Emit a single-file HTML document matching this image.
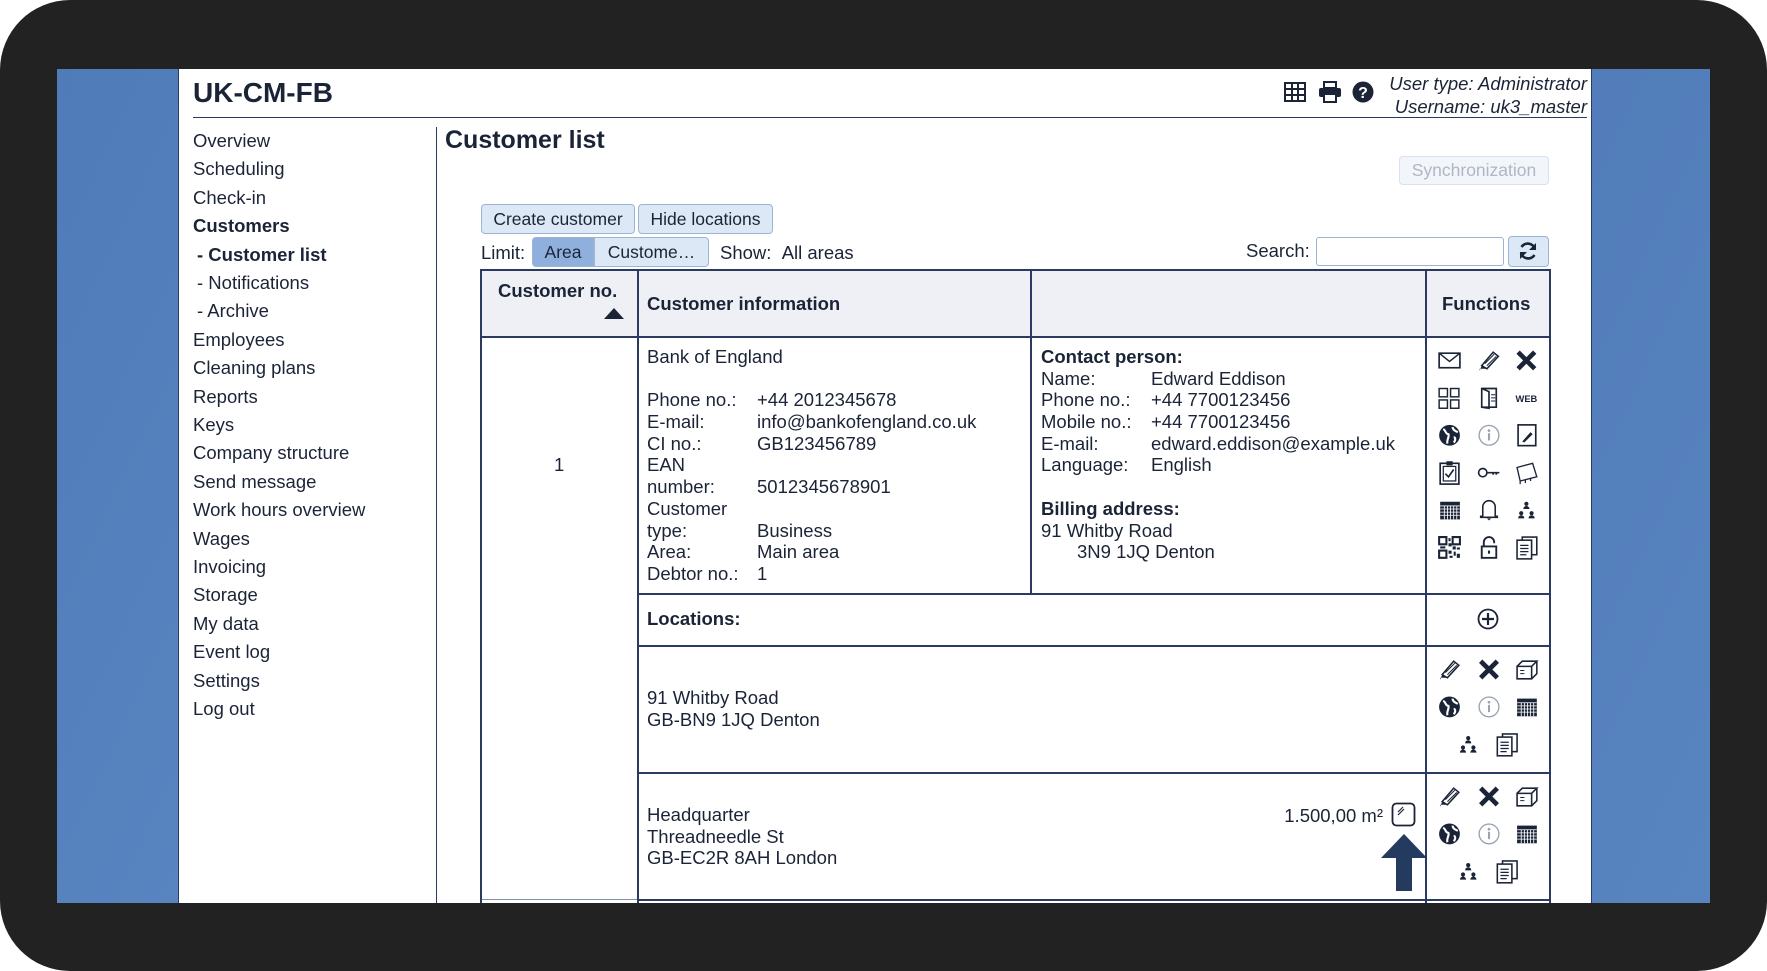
<!DOCTYPE html>
<html><head><meta charset="utf-8">
<style>
*{margin:0;padding:0;box-sizing:border-box}
body{width:1767px;height:971px;background:#fff;overflow:hidden;position:relative;font-family:"Liberation Sans",Arial,sans-serif;color:#1b2437}
#frame{position:absolute;left:0;top:0;width:1767px;height:971px;background:#222;border-radius:70px}
#screen{position:absolute;left:57px;top:69px;width:1653px;height:834px;background:linear-gradient(115deg,#4f7cb9 0%,#5d89c4 40%,#4d78b5 60%,#5884c0 100%)}
#panel{position:absolute;left:178px;top:69px;width:1414px;height:834px;background:#fff;border-left:1px solid #2a3a60;border-right:1px solid #2a3a60}
.a{position:absolute;white-space:nowrap}
.t{font-size:18.5px}
.b{font-weight:bold}
.menu div{position:absolute;left:193px;font-size:18.5px;white-space:nowrap}
.btn{position:absolute;border:1px solid #9cb4d6;background:#dde8f6;border-radius:4px;font-size:17.5px;text-align:center}
.lines div{height:21.7px;line-height:21.7px;font-size:18.5px;white-space:nowrap}
.hl{position:absolute;background:#2a3a60;height:1.5px}
.vl{position:absolute;background:#2a3a60;width:1.5px}
svg.i{position:absolute}
</style></head><body>
<div id="frame"></div>
<div id="screen"></div>
<div id="panel"></div>

<div class="a b" style="left:193px;top:77px;font-size:28px">UK-CM-FB</div>
<div class="hl" style="left:193px;top:117px;width:1394px;height:1px"></div>
<div class="a" style="right:180px;top:72px;font-size:18.5px;font-style:italic;text-align:right;line-height:23px">User type: Administrator<br>Username: uk3_master</div>
<svg class="i" style="left:1284px;top:82px" width="22" height="20" viewBox="0 0 22 20"><rect x="1" y="1" width="20" height="18" fill="none" stroke="#1b2437" stroke-width="2"/><path d="M1 7H21M1 13H21M8 1V19M14 1V19" stroke="#1b2437" stroke-width="2"/></svg>
<svg class="i" style="left:1318px;top:81px" width="24" height="22" viewBox="0 0 24 22"><rect x="6" y="1" width="12" height="6" fill="none" stroke="#1b2437" stroke-width="2"/><rect x="1" y="7" width="22" height="9" rx="2" fill="#1b2437"/><rect x="6" y="13" width="12" height="8" fill="#fff" stroke="#1b2437" stroke-width="2"/></svg>
<svg class="i" style="left:1352px;top:81px" width="22" height="22" viewBox="0 0 22 22"><circle cx="11" cy="11" r="10.5" fill="#1b2437"/><text x="11" y="17" font-size="16" font-weight="bold" text-anchor="middle" fill="#fff" font-family="Liberation Sans">?</text></svg>

<div class="vl" style="left:436px;top:127px;height:776px;width:1px"></div>
<div class="menu">
<div style="top:130px">Overview</div>
<div style="top:158px">Scheduling</div>
<div style="top:187px">Check-in</div>
<div style="top:215px;font-weight:bold">Customers</div>
<div style="top:244px;left:197px;font-weight:bold">- Customer list</div>
<div style="top:272px;left:197px">- Notifications</div>
<div style="top:300px;left:197px">- Archive</div>
<div style="top:329px">Employees</div>
<div style="top:357px">Cleaning plans</div>
<div style="top:386px">Reports</div>
<div style="top:414px">Keys</div>
<div style="top:442px">Company structure</div>
<div style="top:471px">Send message</div>
<div style="top:499px">Work hours overview</div>
<div style="top:528px">Wages</div>
<div style="top:556px">Invoicing</div>
<div style="top:584px">Storage</div>
<div style="top:613px">My data</div>
<div style="top:641px">Event log</div>
<div style="top:670px">Settings</div>
<div style="top:698px">Log out</div>
</div>

<div class="a b" style="left:445px;top:126px;font-size:25px">Customer list</div>
<div class="btn" style="left:1399px;top:156px;width:150px;height:29px;line-height:27px;color:#b0b6c2;background:#f2f6fb;border-color:#d8e2f0">Synchronization</div>
<div class="btn" style="left:481px;top:204px;width:154px;height:30px;line-height:28px">Create customer</div>
<div class="btn" style="left:638px;top:204px;width:135px;height:30px;line-height:28px">Hide locations</div>
<div class="a t" style="left:481px;top:242px">Limit:</div>
<div class="btn" style="left:532px;top:237px;width:62px;height:30px;line-height:28px;background:#8fb0dc;border-radius:4px 0 0 4px">Area</div>
<div class="btn" style="left:594px;top:237px;width:115px;height:30px;line-height:28px;border-radius:0 4px 4px 0">Custome…</div>
<div class="a t" style="left:720px;top:242px">Show:&nbsp;&nbsp;All areas</div>
<div class="a t" style="left:1246px;top:240px">Search:</div>
<div class="a" style="left:1316px;top:237px;width:188px;height:29px;border:1px solid #9cb4d6;border-radius:3px"></div>
<div class="btn" style="left:1508px;top:236px;width:41px;height:31px"></div>
<svg class="i" style="left:1517px;top:240px" width="22" height="22" viewBox="0 0 22 22"><path d="M18 9A7.5 7.5 0 0 0 4.5 7M4 13A7.5 7.5 0 0 0 17.5 15" fill="none" stroke="#1b2437" stroke-width="2.6"/><path d="M19 3V10H12Z M3 19V12H10Z" fill="#1b2437"/></svg>

<div class="a" style="left:480px;top:269px;width:1070px;height:67px;background:#eef0f6"></div>
<div class="hl" style="left:480px;top:269px;width:1070px"></div>
<div class="hl" style="left:480px;top:336px;width:1070px"></div>
<div class="hl" style="left:637px;top:593px;width:913px"></div>
<div class="hl" style="left:637px;top:645px;width:913px"></div>
<div class="hl" style="left:637px;top:772px;width:913px"></div>
<div class="hl" style="left:637px;top:899px;width:913px"></div>
<div class="hl" style="left:480px;top:899px;width:157px;height:1px;background:#8090b0"></div>
<div class="vl" style="left:480px;top:269px;height:634px"></div>
<div class="vl" style="left:637px;top:269px;height:634px"></div>
<div class="vl" style="left:1030px;top:269px;height:324px"></div>
<div class="vl" style="left:1425px;top:269px;height:634px"></div>
<div class="vl" style="left:1549px;top:269px;height:634px"></div>

<div class="a b t" style="left:498px;top:280px">Customer no.</div>
<svg class="i" style="left:604px;top:308px" width="20" height="11"><path d="M0 11L10 0L20 11Z" fill="#1b2437"/></svg>
<div class="a b t" style="left:647px;top:293px">Customer information</div>
<div class="a b t" style="left:1442px;top:293px">Functions</div>
<div class="a t" style="left:554px;top:454px">1</div>

<div class="a lines" style="left:647px;top:346px">
<div>Bank of England</div><div>&nbsp;</div>
<div>Phone no.:</div><div>E-mail:</div><div>CI no.:</div><div>EAN</div><div>number:</div><div>Customer</div><div>type:</div><div>Area:</div><div>Debtor no.:</div>
</div>
<div class="a lines" style="left:757px;top:346px">
<div>&nbsp;</div><div>&nbsp;</div>
<div>+44 2012345678</div><div>info@bankofengland.co.uk</div><div>GB123456789</div><div>&nbsp;</div><div>5012345678901</div><div>&nbsp;</div><div>Business</div><div>Main area</div><div>1</div>
</div>
<div class="a lines" style="left:1041px;top:346px">
<div class="b">Contact person:</div><div>Name:</div><div>Phone no.:</div><div>Mobile no.:</div><div>E-mail:</div><div>Language:</div><div>&nbsp;</div><div class="b">Billing address:</div><div>91 Whitby Road</div><div style="padding-left:36px">3N9 1JQ Denton</div>
</div>
<div class="a lines" style="left:1151px;top:346px">
<div>&nbsp;</div><div>Edward Eddison</div><div>+44 7700123456</div><div>+44 7700123456</div><div>edward.eddison@example.uk</div><div>English</div>
</div>

<div class="a b t" style="left:647px;top:608px">Locations:</div>
<svg class="i" style="left:1477px;top:608px" width="22" height="22" viewBox="0 0 22 22"><circle cx="11" cy="11" r="9.5" fill="none" stroke="#1b2437" stroke-width="1.8"/><path d="M11 5V17M5 11H17" stroke="#1b2437" stroke-width="2.2"/></svg>

<div class="a lines" style="left:647px;top:687px"><div>91 Whitby Road</div><div>GB-BN9 1JQ Denton</div></div>
<div class="a lines" style="left:647px;top:804px"><div>Headquarter</div><div>Threadneedle St</div><div>GB-EC2R 8AH London</div></div>
<div class="a t" style="right:384px;top:805px">1.500,00 m²</div>
<svg class="i" style="left:1391px;top:802px" width="25" height="25" viewBox="0 0 25 25"><rect x="1.5" y="1.5" width="22" height="22" rx="4" fill="none" stroke="#1b2437" stroke-width="1.8"/><path d="M7 10L12 5M7 13L13 7" stroke="#1b2437" stroke-width="1.2"/></svg>
<svg class="i" style="left:1381px;top:834px" width="46" height="57" viewBox="0 0 46 57"><path d="M23 0L46 24H31V57H15V24H0Z" fill="#243a5e"/></svg>

<svg width="0" height="0" style="position:absolute">
<defs>
<g id="mail"><rect x="2" y="5" width="20" height="14" fill="none" stroke="#1b2437" stroke-width="1.6"/><path d="M2 5L12 13L22 5" fill="none" stroke="#1b2437" stroke-width="1.4"/></g>
<g id="pen"><path d="M5 17L16 4L21 8L10 20Z" fill="none" stroke="#1b2437" stroke-width="1.5"/><path d="M3 22L5 17L10 20H3Z" fill="#1b2437"/><path d="M8 15L17 6M10 17L19 8" stroke="#1b2437" stroke-width="1"/></g>
<g id="x"><path d="M4 4L20 20M20 4L4 20" stroke="#1b2437" stroke-width="4.5"/></g>
<g id="cubes"><g fill="none" stroke="#1b2437" stroke-width="1.4"><rect x="2" y="3" width="8" height="8"/><rect x="13" y="3" width="8" height="8"/><rect x="2" y="14" width="8" height="8"/><rect x="13" y="14" width="8" height="8"/></g></g>
<g id="door"><path d="M5 3H19V21H5Z M5 3L12 6V22L5 21" fill="none" stroke="#1b2437" stroke-width="1.6"/><path d="M14 9H18M14 12H18M14 15H18" stroke="#1b2437"/></g>
<g id="web"><text x="12" y="16" font-size="9" font-weight="bold" text-anchor="middle" fill="#1b2437" font-family="Liberation Sans">WEB</text></g>
<g id="globe"><circle cx="12" cy="12" r="10" fill="#1b2437"/><path d="M6 6C9 8 8 11 11 11C12 14 9 16 10 20M15 4C15 7 18 8 20 9M16 14C18 14 18 17 16 19" stroke="#fff" stroke-width="2" fill="none"/></g>
<g id="info"><circle cx="12" cy="12" r="9.5" fill="none" stroke="#9aa3b2" stroke-width="1.3"/><circle cx="12" cy="7.5" r="1.3" fill="#9aa3b2"/><path d="M12 10V17" stroke="#9aa3b2" stroke-width="2"/></g>
<g id="note"><rect x="4" y="2" width="17" height="20" fill="none" stroke="#1b2437" stroke-width="1.6"/><path d="M8 18L16 9L18 11L10 19Z" fill="#1b2437"/></g>
<g id="clip"><rect x="3" y="3" width="18" height="20" fill="none" stroke="#1b2437" stroke-width="1.6"/><rect x="6" y="6" width="12" height="14" fill="none" stroke="#1b2437" stroke-width="1.2"/><rect x="9" y="1" width="6" height="4" fill="#1b2437"/><path d="M8 13L11 16L16 9" fill="none" stroke="#1b2437" stroke-width="1.6"/></g>
<g id="key"><circle cx="6" cy="12" r="4" fill="none" stroke="#1b2437" stroke-width="1.6"/><path d="M10 12H22M16 12V14M19 12V14" stroke="#1b2437" stroke-width="1.6"/></g>
<g id="map"><path d="M3 7L18 3L22 16L6 20Z" fill="none" stroke="#1b2437" stroke-width="1.3"/><path d="M6 20V23M11 19V22M16 17V20" stroke="#1b2437" stroke-width="1.2"/></g>
<g id="cal"><rect x="3" y="4" width="19" height="17" fill="#1b2437"/><path d="M3 8H22M3 11H22M3 14H22M3 17H22M7 8V21M10 8V21M13 8V21M16 8V21M19 8V21" stroke="#fff" stroke-width="0.8"/></g>
<g id="bell"><path d="M6 18V9A6 6 0 0 1 18 9V18H20V19H4V18Z" fill="none" stroke="#1b2437" stroke-width="1.5"/><path d="M10 20H14L12 22Z" fill="#1b2437"/></g>
<g id="org"><circle cx="12" cy="6" r="2" fill="#1b2437"/><path d="M9 11A3 3 0 0 1 15 11Z" fill="#1b2437"/><circle cx="7" cy="15" r="2" fill="#1b2437"/><path d="M4 20A3 3 0 0 1 10 20Z" fill="#1b2437"/><circle cx="17" cy="15" r="2" fill="#1b2437"/><path d="M14 20A3 3 0 0 1 20 20Z" fill="#1b2437"/></g>
<g id="qr"><path d="M2 2H9V9H2ZM15 2H22V9H15ZM2 15H9V22H2Z" fill="none" stroke="#1b2437" stroke-width="2"/><path d="M11 3H13V6H11ZM11 8H14V11H11ZM15 11H18V14H15ZM19 12H22V14H19ZM11 15H14V18H11ZM16 16H18V20H16ZM19 18H22V22H19ZM12 20H15V22H12ZM3 11H8V13H3Z" fill="#1b2437"/></g>
<g id="lock"><path d="M7 11V7A5 5 0 0 1 17 7V8" fill="none" stroke="#1b2437" stroke-width="1.8"/><rect x="5" y="11" width="14" height="11" fill="none" stroke="#1b2437" stroke-width="1.8"/><rect x="11" y="15" width="2" height="3" fill="#1b2437"/></g>
<g id="docs"><rect x="8" y="2" width="14" height="17" fill="none" stroke="#1b2437" stroke-width="1.5"/><rect x="3" y="5" width="14" height="18" fill="#fff" stroke="#1b2437" stroke-width="1.5"/><path d="M6 10H14M6 13H14M6 16H14M6 19H12" stroke="#1b2437" stroke-width="1.2"/></g>
<g id="box"><path d="M3 9H17V21H3ZM3 9L8 4H22L17 9M22 4V16L17 21" fill="none" stroke="#1b2437" stroke-width="1.5"/><path d="M6 13H10M6 16H10" stroke="#1b2437"/></g>
</defs>
</svg>

<svg class="i" style="left:1437px;top:348px" width="104" height="214" viewBox="0 0 100 206">
<use href="#mail" x="0" y="0"/><use href="#pen" x="38" y="0"/><use href="#x" x="74" y="0"/>
<use href="#cubes" x="0" y="36"/><use href="#door" x="38" y="36"/><use href="#web" x="74" y="36"/>
<use href="#globe" x="0" y="72"/><use href="#info" x="38" y="72"/><use href="#note" x="74" y="72"/>
<use href="#clip" x="0" y="108"/><use href="#key" x="38" y="108"/><use href="#map" x="74" y="108"/>
<use href="#cal" x="0" y="144"/><use href="#bell" x="38" y="144"/><use href="#org" x="74" y="144"/>
<use href="#qr" x="0" y="180"/><use href="#lock" x="38" y="180"/><use href="#docs" x="74" y="180"/>
</svg>
<svg class="i" style="left:1437px;top:657px" width="104" height="104" viewBox="0 0 100 100">
<use href="#pen" x="0" y="0"/><use href="#x" x="38" y="0"/><use href="#box" x="74" y="0"/>
<use href="#globe" x="0" y="36"/><use href="#info" x="38" y="36"/><use href="#cal" x="74" y="36"/>
<use href="#org" x="18" y="72"/><use href="#docs" x="55" y="72"/>
</svg>
<svg class="i" style="left:1437px;top:784px" width="104" height="104" viewBox="0 0 100 100">
<use href="#pen" x="0" y="0"/><use href="#x" x="38" y="0"/><use href="#box" x="74" y="0"/>
<use href="#globe" x="0" y="36"/><use href="#info" x="38" y="36"/><use href="#cal" x="74" y="36"/>
<use href="#org" x="18" y="72"/><use href="#docs" x="55" y="72"/>
</svg>
</body></html>
